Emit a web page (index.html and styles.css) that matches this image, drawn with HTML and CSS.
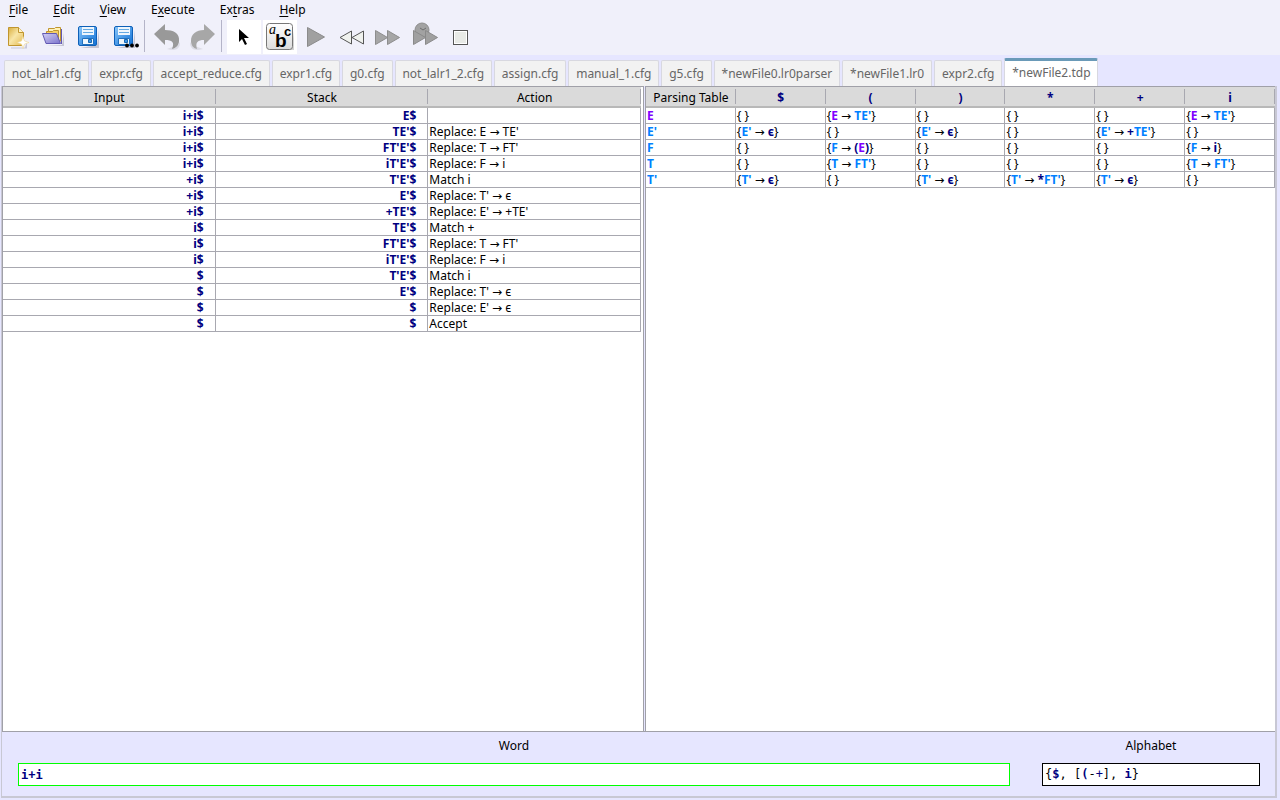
FILE: index.html
```
<!DOCTYPE html>
<html lang="en">
<head>
<meta charset="utf-8">
<title>*newFile2.tdp</title>
<link rel="stylesheet" href="styles.css">
</head>
<body>
<nav class="menubar">
<button type="button"><u>F</u>ile</button>
<button type="button"><u>E</u>dit</button>
<button type="button"><u>V</u>iew</button>
<button type="button">E<u>x</u>ecute</button>
<button type="button">Ex<u>t</u>ras</button>
<button type="button"><u>H</u>elp</button>
</nav>
<div class="toolbar">
<button type="button" aria-label="New"><svg viewBox="0 0 32 32"><defs><linearGradient id="gold" x1="0" y1="0" x2="1" y2="1"><stop offset="0" stop-color="#d9ad3c"/><stop offset=".45" stop-color="#f8e6a8"/><stop offset="1" stop-color="#e3b94f"/></linearGradient><linearGradient id="violet" x1="0" y1="0" x2="1" y2="1"><stop offset="0" stop-color="#d3d0f4"/><stop offset="1" stop-color="#7a72cc"/></linearGradient><linearGradient id="blue" x1="0" y1="0" x2="1" y2="1"><stop offset="0" stop-color="#8cc8fa"/><stop offset="1" stop-color="#0d6fd6"/></linearGradient><linearGradient id="plate" x1="0" y1="0" x2="0" y2="1"><stop offset="0" stop-color="#fff"/><stop offset="1" stop-color="#dcdcdc"/></linearGradient></defs><path d="M9 26.500h14l2-7v8H9z" fill="#c8c8d8"/><path d="M6.500 6.500h10l5 5v13h-15z" fill="url(#gold)" stroke="#c0952e"/><path d="M16.500 6.500v5h5" fill="#fff3c8" stroke="#c0952e"/><path d="M21 15.500l1.500 4.500L27 21.500 22.500 23 21 27.500 19.500 23 15 21.500l4.500-1.500z" fill="#fff" stroke="#f0d890" stroke-width=".6"/></svg></button>
<button type="button" aria-label="Open"><svg viewBox="0 0 32 32"><path d="M8 25h18V12l-2 12z" fill="#c6c6d4"/><path d="M10.500 20V7.500h6l1-1h5v14" fill="#fff1b5" stroke="#c0952e"/><path d="M8.500 20V10.500h6l1-1h5v11" fill="#f5cf67" stroke="#c0952e"/><path d="M4.500 12.500h14l4 10H8z" fill="url(#violet)" stroke="#6259b3"/><path d="M23.500 23V8" stroke="#6259b3"/></svg></button>
<button type="button" aria-label="Save"><svg viewBox="0 0 32 32"><path d="M6 27h19V9l-2 15z" fill="#c4c4d2"/><rect x="4.500" y="5.500" width="18" height="19" rx="1.500" fill="url(#blue)" stroke="#0e60b8"/><path d="M8 6h12v8H8z" fill="#eef6fd"/><path d="M9 8.500h10M9 11.500h10" stroke="#65a9e2"/><path d="M8.500 17.500h11v6h-11z" fill="#eef6fd" stroke="#2070bd"/><path d="M14.500 18.500h3v3h-3z" fill="#3c96e8" stroke="#1766af"/></svg></button>
<button type="button" aria-label="Save as"><svg viewBox="0 0 32 32"><path d="M6 27h19V9l-2 15z" fill="#c4c4d2"/><rect x="4.500" y="5.500" width="18" height="19" rx="1.500" fill="url(#blue)" stroke="#0e60b8"/><path d="M8 6h12v8H8z" fill="#eef6fd"/><path d="M9 8.500h10M9 11.500h10" stroke="#65a9e2"/><path d="M8.500 17.500h11v6h-11z" fill="#eef6fd" stroke="#2070bd"/><path d="M14.500 18.500h3v3h-3z" fill="#3c96e8" stroke="#1766af"/><circle cx="17" cy="24.500" r="1.900"/><circle cx="22" cy="24.500" r="1.900"/><circle cx="27" cy="24.500" r="1.900"/></svg></button>
<span class="separator"></span>
<button type="button" aria-label="Undo"><svg viewBox="0 0 32 32"><path d="M16 28c8 2 13 1 13-7l-2 3z" fill="#dcdce6"/><path d="M3 13 14 3v6c8 0 15 3 14 11 0 4-3 7-7 8 3-7 0-9-7-9v5z" fill="#999"/></svg></button>
<button type="button" aria-label="Redo"><svg viewBox="0 0 32 32"><path d="M16 28c-8 2-13 1-13-7l2 3z" fill="#dcdce6"/><path d="M28 13 17 3v6c-8 0-13 4-13 11 0 4 2 7 6 8-2-7 1-9 7-9v5z" fill="#a7a7a7"/></svg></button>
<span class="separator"></span>
<button type="button" class="on" aria-label="Select"><svg viewBox="0 0 32 32"><path d="M11 8v13l3-3 3 6 2-1-3-6h5z" fill="#000"/></svg></button>
<button type="button" class="on" aria-label="Symbols"><svg viewBox="0 0 32 32"><path d="M5 29h25V9l-2 18z" fill="#d3d3d3"/><rect x="2.500" y="2.500" width="26" height="26" rx="3" fill="url(#plate)" stroke="#777"/><text x="5" y="13" class="glyph-a">a</text><text x="20" y="15" class="glyph-c">c</text><text x="11" y="26" class="glyph-b">b</text></svg></button>
<button type="button" aria-label="Run"><svg viewBox="0 0 32 32"><path d="M7.500 6.500v19l17-9.500z" fill="#a0a0a0" stroke="#8b8b8b"/></svg></button>
<button type="button" aria-label="Step back"><svg viewBox="0 0 32 32"><path d="M15.500 10v13L4 16.500zM27.500 10v13L16 16.500z" fill="#f0f2ee" stroke="#555"/></svg></button>
<button type="button" aria-label="Step forward"><svg viewBox="0 0 32 32"><path d="M3.500 9.500v14l12-7zM15.500 9.500v14l12-7z" fill="#a6a6a6" stroke="#8d8d8d"/></svg></button>
<button type="button" aria-label="Run timed"><svg viewBox="0 0 32 32"><circle cx="14" cy="9" r="7" fill="#a2a2a2" stroke="#8d8d8d"/><path d="m12 7 3 2 3-2" fill="none" stroke="#6e6e6e"/><path d="M5.500 9.500v14l12-7zM17.500 9.500v14l12-7z" fill="#a0a0a0" stroke="#8a8a8a"/></svg></button>
<button type="button" aria-label="Stop"><svg viewBox="0 0 32 32"><rect x="9.500" y="9.500" width="14" height="14" fill="#e8eae6" stroke="#555"/><rect x="10.500" y="10.500" width="12" height="12" fill="none" stroke="#fff"/></svg></button>
</div>
<main class="workspace">
<div class="tabs" role="tablist">
<button type="button" role="tab">not_lalr1.cfg</button>
<button type="button" role="tab">expr.cfg</button>
<button type="button" role="tab">accept_reduce.cfg</button>
<button type="button" role="tab">expr1.cfg</button>
<button type="button" role="tab">g0.cfg</button>
<button type="button" role="tab">not_lalr1_2.cfg</button>
<button type="button" role="tab">assign.cfg</button>
<button type="button" role="tab">manual_1.cfg</button>
<button type="button" role="tab">g5.cfg</button>
<button type="button" role="tab">*newFile0.lr0parser</button>
<button type="button" role="tab">*newFile1.lr0</button>
<button type="button" role="tab">expr2.cfg</button>
<button type="button" role="tab" aria-selected="true">*newFile2.tdp</button>
</div>
<div class="editor">
<div class="split">
<section class="pane">
<table class="trace">
<thead><tr><th>Input</th><th>Stack</th><th>Action</th></tr></thead>
<tbody>
<tr><td>i+i$</td><td>E$</td><td></td></tr>
<tr><td>i+i$</td><td>TE'$</td><td>Replace: E → TE'</td></tr>
<tr><td>i+i$</td><td>FT'E'$</td><td>Replace: T → FT'</td></tr>
<tr><td>i+i$</td><td>iT'E'$</td><td>Replace: F → i</td></tr>
<tr><td>+i$</td><td>T'E'$</td><td>Match i</td></tr>
<tr><td>+i$</td><td>E'$</td><td>Replace: T' → ϵ</td></tr>
<tr><td>+i$</td><td>+TE'$</td><td>Replace: E' → +TE'</td></tr>
<tr><td>i$</td><td>TE'$</td><td>Match +</td></tr>
<tr><td>i$</td><td>FT'E'$</td><td>Replace: T → FT'</td></tr>
<tr><td>i$</td><td>iT'E'$</td><td>Replace: F → i</td></tr>
<tr><td>$</td><td>T'E'$</td><td>Match i</td></tr>
<tr><td>$</td><td>E'$</td><td>Replace: T' → ϵ</td></tr>
<tr><td>$</td><td>$</td><td>Replace: E' → ϵ</td></tr>
<tr><td>$</td><td>$</td><td>Accept</td></tr>
</tbody>
</table>
</section>
<section class="pane">
<table class="parsing">
<thead><tr><th>Parsing Table</th><th><b>$</b></th><th><b>(</b></th><th><b>)</b></th><th><b>*</b></th><th><b>+</b></th><th><b>i</b></th></tr></thead>
<tbody>
<tr><td><b class="start">E</b></td><td>{ }</td><td>{<b class="start">E</b> → <b class="nt">TE'</b>}</td><td>{ }</td><td>{ }</td><td>{ }</td><td>{<b class="start">E</b> → <b class="nt">TE'</b>}</td></tr>
<tr><td><b class="nt">E'</b></td><td>{<b class="nt">E'</b> → <b>ϵ</b>}</td><td>{ }</td><td>{<b class="nt">E'</b> → <b>ϵ</b>}</td><td>{ }</td><td>{<b class="nt">E'</b> → <b>+</b><b class="nt">TE'</b>}</td><td>{ }</td></tr>
<tr><td><b class="nt">F</b></td><td>{ }</td><td>{<b class="nt">F</b> → <b>(</b><b class="start">E</b><b>)</b>}</td><td>{ }</td><td>{ }</td><td>{ }</td><td>{<b class="nt">F</b> → <b>i</b>}</td></tr>
<tr><td><b class="nt">T</b></td><td>{ }</td><td>{<b class="nt">T</b> → <b class="nt">FT'</b>}</td><td>{ }</td><td>{ }</td><td>{ }</td><td>{<b class="nt">T</b> → <b class="nt">FT'</b>}</td></tr>
<tr><td><b class="nt">T'</b></td><td>{<b class="nt">T'</b> → <b>ϵ</b>}</td><td>{ }</td><td>{<b class="nt">T'</b> → <b>ϵ</b>}</td><td>{<b class="nt">T'</b> → <b>*</b><b class="nt">FT'</b>}</td><td>{<b class="nt">T'</b> → <b>ϵ</b>}</td><td>{ }</td></tr>
</tbody>
</table>
</section>
</div>
<div class="wordbar">
<div class="field word"><label for="word">Word</label><input id="word" type="text" value="i+i"></div>
<div class="field alphabet"><label for="alphabet">Alphabet</label><output id="alphabet">{<b>$</b>, [<b>(</b>-<b class="plus">+</b>], <b>i</b>}</output></div>
</div>
</div>
</main>
</body>
</html>
```
FILE: styles.css
```
* { box-sizing: border-box; }
body {
  margin: 0;
  min-height: 100vh;
  display: flex;
  flex-direction: column;
  background: #f0f0fa;
  color: #000;
  font: 12px/16px "Noto Sans", "DejaVu Sans", sans-serif;
}
button { font: inherit; color: inherit; border: 0; background: none; padding: 0; margin: 0; }
b { color: #000080; }
.start { color: #8000ff; }
.nt { color: #0080ff; }
.menubar { display: flex; gap: 25px; height: 20px; padding-left: 9px; align-items: center; }
.menubar u { text-underline-offset: 2px; }
.toolbar { display: flex; height: 35px; align-items: stretch; }
.toolbar button { width: 36px; height: 34px; display: flex; align-items: center; justify-content: center; }
.toolbar svg { width: 32px; height: 32px; }
.toolbar .on { background: #fff; border: 0 solid #f0f0fa; border-width: 0 1px; }
.separator { width: 5px; height: 32px; border-left: 1px solid #b4b4c8; }
.glyph-a { font: italic 14px "Liberation Serif", serif; }
.glyph-b { font: bold 19px "Liberation Sans", sans-serif; }
.glyph-c { font: bold 13px "Liberation Sans", sans-serif; }
.workspace { flex: 1; display: flex; flex-direction: column; background: #e6e6ff; padding: 3px 3px 2px 1px; }
.tabs { display: flex; align-items: flex-end; gap: 2px; width: 86%; height: 28px; padding-left: 3px; }
.tabs button {
  flex: 1 1 auto;
  height: 26px;
  padding: 1px 6px 0;
  border: 1px solid #d8d8e0;
  border-bottom: 0;
  border-radius: 2px 2px 0 0;
  background: #f2f2f2;
  color: #666;
  white-space: nowrap;
}
.tabs [aria-selected="true"] { height: 28px; border-top: 3px solid #6a9ab8; background: #fff; padding-bottom: 3px; }
.editor { flex: 1; display: flex; flex-direction: column; border: 1px solid #c8c8d4; border-width: 0 2px 2px 1px; }
.split { flex: 1; display: grid; grid-template-columns: 643fr 631fr; border-bottom: 1px solid #a0a0a8; gap: 1px; }
.pane { background: #fff; border: 1px solid #a0a0a8; border-width: 1px 1px 0; }
.pane + .pane { border-right: 0; }
table { width: 100%; border-collapse: separate; border-spacing: 0; table-layout: fixed; }
.trace { width: calc(100% - 2px); }
th { height: 21px; padding: 2px 0 0; font-weight: normal; background: #dadada linear-gradient(#a8a8b0, #a8a8b0) right center / 1px 15px no-repeat; border-bottom: 2px solid #b8b8b8; }
td { height: 16px; padding: 0 0 0 1px; line-height: 15px; border: 1px solid #a8a8b0; border-width: 0 1px 1px 0; white-space: nowrap; }
.trace td:nth-child(-n+2) { text-align: right; padding-right: 11px; font-weight: bold; color: #000080; }
.wordbar { display: flex; gap: 32px; padding: 6px 15px 10px 16px; }
.field { display: flex; flex-direction: column; gap: 9px; text-align: center; }
.word { flex: 992; }
.alphabet { flex: 218; }
.field input, .field output {
  width: 100%;
  height: 23px;
  padding: 0 2px;
  border: 1px solid #000;
  background: #fff;
  font: 12px/20px "DejaVu Sans Mono", monospace;
  text-align: left;
}
.field input { border-color: #0f0; color: #000080; font-weight: bold; }
.plus { font-weight: normal; }
```
